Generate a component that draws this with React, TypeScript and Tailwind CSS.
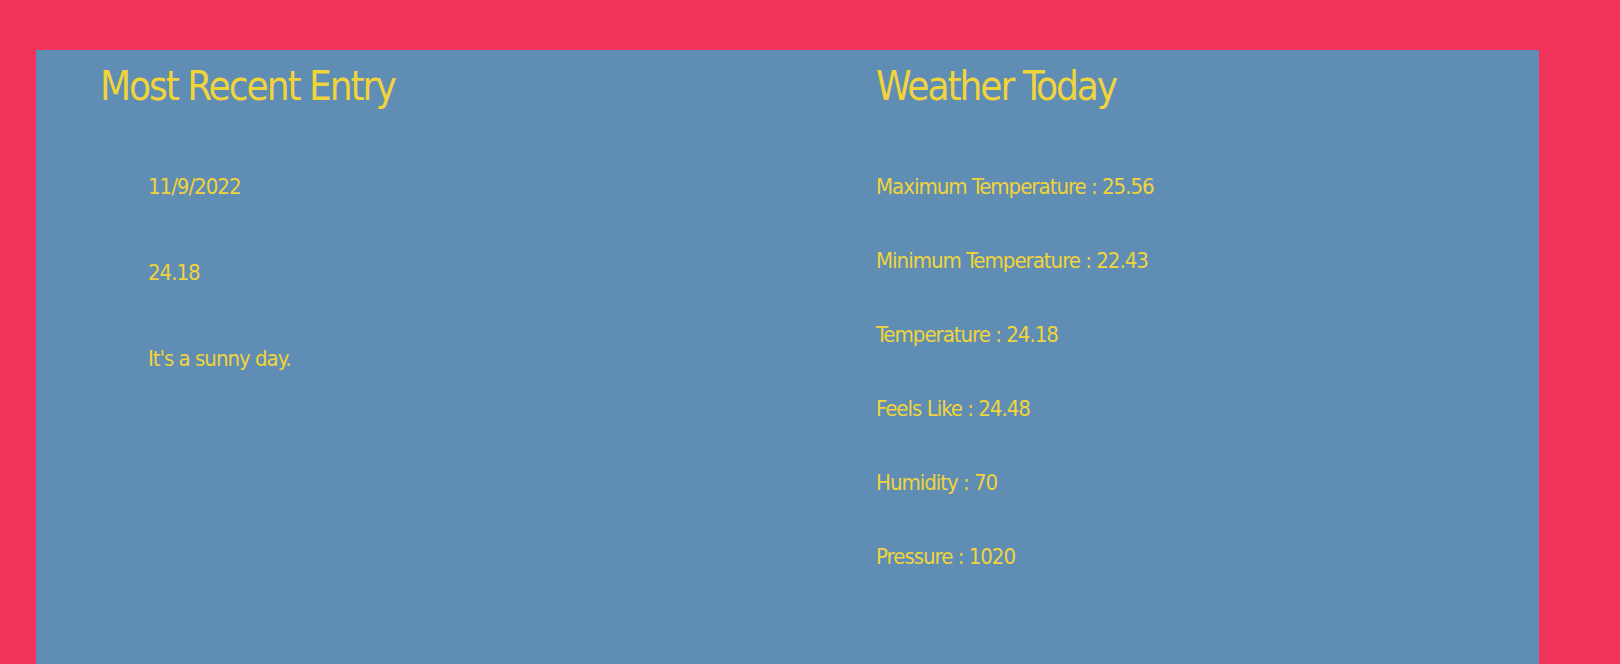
import React from "react";

const entry = {
  date: "11/9/2022",
  temp: "24.18",
  feelings: "It's a sunny day.",
};

const weather = [
  { label: "Maximum Temperature", value: "25.56" },
  { label: "Minimum Temperature", value: "22.43" },
  { label: "Temperature", value: "24.18" },
  { label: "Feels Like", value: "24.48" },
  { label: "Humidity", value: "70" },
  { label: "Pressure", value: "1020" },
];

const font = {
  fontFamily:
    '"Liberation Sans Narrow", "DejaVu Sans Condensed", "Liberation Sans", sans-serif',
};

export default function App() {
  return (
    <div
      className="min-h-screen bg-[#f3345a] pt-[50px] pl-[36px] font-stretch-condensed"
      style={font}
    >
      <div className="w-[1503px] min-h-[640px] bg-[#608db4] pt-[16px] text-[#f0d43a]">
        <div className="grid grid-cols-[840px_1fr]">
          {/* most recent entry */}
          <section className="pl-[64px]">
            <h1 className="text-[40px] leading-[40px] font-normal tracking-[-2px]">
              Most Recent Entry
            </h1>
            <div className="mt-[70px] flex flex-col gap-[64px] pl-[48px] text-[22px] leading-[22px] tracking-[-1px]">
              <div>{entry.date}</div>
              <div>{entry.temp}</div>
              <div>{entry.feelings}</div>
            </div>
          </section>

          {/* weather */}
          <section>
            <h1 className="text-[40px] leading-[40px] font-normal tracking-[-2px]">
              Weather Today
            </h1>
            <div className="mt-[70px] flex flex-col gap-[52px] text-[22px] leading-[22px] tracking-[-1px]">
              {weather.map((w) => (
                <div key={w.label}>
                  {w.label} : {w.value}
                </div>
              ))}
            </div>
          </section>
        </div>
      </div>
    </div>
  );
}
